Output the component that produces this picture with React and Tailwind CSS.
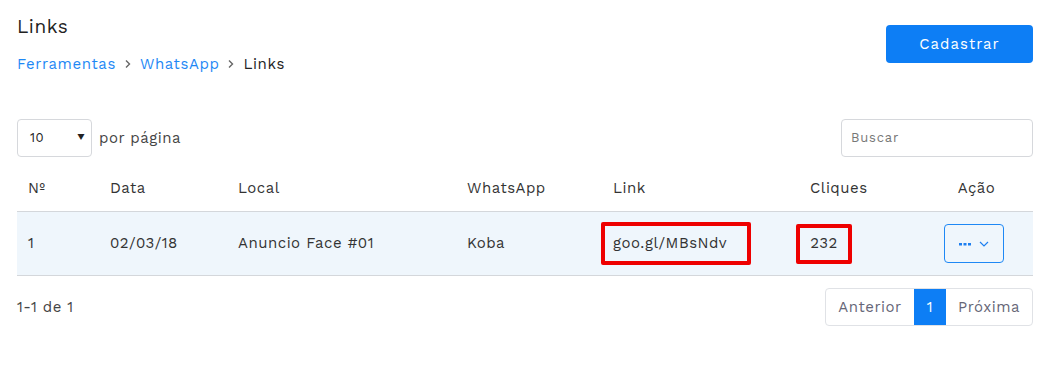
import React from "react";

export default function App() {
  const font = { fontFamily: '"Work Sans", "Open Sans", "Liberation Sans", sans-serif' };
  return (
    <div className="w-[1051px] h-[372px] bg-white text-[#333] pl-[17px] pr-[18px] pt-[14px] tracking-[0.5px]" style={font}>
      <div className="flex justify-between">
        <div>
          <h1 className="text-[19px] leading-[26px] text-[#222]">Links</h1>
          <div className="flex items-center text-[15px] mt-[14px] leading-[20px] tracking-[0.6px]">
            <span className="text-[#1e88f5]">Ferramentas</span>
            <svg width="14" height="14" viewBox="0 0 14 14" className="mx-[5px]"><path d="M5 3.5 L8.5 7 L5 10.5" fill="none" stroke="#666" strokeWidth="1.4" /></svg>
            <span className="text-[#1e88f5]">WhatsApp</span>
            <svg width="14" height="14" viewBox="0 0 14 14" className="mx-[5px]"><path d="M5 3.5 L8.5 7 L5 10.5" fill="none" stroke="#666" strokeWidth="1.4" /></svg>
            <span className="text-[#222]">Links</span>
          </div>
        </div>
        <button className="mt-[11px] w-[147px] h-[38px] rounded-[4px] bg-[#0d7ef5] text-white text-[15px] tracking-[1px]">Cadastrar</button>
      </div>

      <div className="flex justify-between items-center mt-[45px]">
        <div className="flex items-center">
          <div className="w-[75px] h-[38px] border border-[#d6d8dc] rounded-[4px] flex items-center justify-between pl-[12px] pr-[6px] text-[13px] text-[#222]">
            <span>10</span>
            <span className="text-[9px]">▼</span>
          </div>
          <span className="ml-[7px] text-[15px] text-[#444]">por página</span>
        </div>
        <div className="w-[192px] h-[38px] border border-[#d6d8dc] rounded-[4px] flex items-center px-[9px] text-[13px] text-[#777] tracking-[0.8px]">Buscar</div>
      </div>

      <div className="mt-[8px] text-[15px]">
        <div className="flex items-center h-[47px] border-b border-[#d4d7db] text-[#333]">
          <div className="w-[93px] pl-[11px]">Nº</div>
          <div className="w-[128px]">Data</div>
          <div className="w-[229px]">Local</div>
          <div className="w-[146px]">WhatsApp</div>
          <div className="w-[197px]">Link</div>
          <div className="w-[110px]">Cliques</div>
          <div className="flex-1 text-center">Ação</div>
        </div>
        <div className="flex items-center h-[64px] bg-[#eff6fc] border-b border-[#d4d7db] text-[#333]">
          <div className="w-[93px] pl-[11px]">1</div>
          <div className="w-[128px]">02/03/18</div>
          <div className="w-[229px]">Anuncio Face #01</div>
          <div className="w-[146px]">Koba</div>
          <div className="w-[195px] -ml-[12px] mr-[14px]">
            <div className="w-[150px] h-[43px] border-[4px] border-[#ee0000] rounded-[2px] flex items-center pl-[8px]">goo.gl/MBsNdv</div>
          </div>
          <div className="w-[110px] -ml-[14px] mr-[14px]">
            <div className="w-[56px] h-[40px] border-[4px] border-[#ee0000] rounded-[2px] flex items-center justify-center">232</div>
          </div>
          <div className="flex-1 flex justify-center">
            <div className="w-[60px] h-[39px] border border-[#1e88f5] rounded-[4px] flex items-center justify-center gap-[8px] ml-[-6px]">
              <svg width="12" height="4" viewBox="0 0 12 4"><rect x="0" y="1" width="3" height="2.5" fill="#1e7ff0"/><rect x="4.5" y="1" width="3" height="2.5" fill="#1e7ff0"/><rect x="9" y="1" width="3" height="2.5" fill="#1e7ff0"/></svg>
              <svg width="10" height="6" viewBox="0 0 10 6"><path d="M1 1 L5 5 L9 1" fill="none" stroke="#1e7ff0" strokeWidth="1.2"/></svg>
            </div>
          </div>
        </div>
      </div>

      <div className="flex justify-between items-center mt-[12px]">
        <span className="text-[15px] text-[#444]">1-1 de 1</span>
        <div className="flex h-[38px] border border-[#e0e2e6] rounded-[4px] text-[15px] overflow-hidden">
          <div className="w-[88px] flex items-center justify-center text-[#667]">Anterior</div>
          <div className="w-[32px] flex items-center justify-center bg-[#0d7ef5] text-white">1</div>
          <div className="w-[86px] flex items-center justify-center text-[#667]">Próxima</div>
        </div>
      </div>
    </div>
  );
}
